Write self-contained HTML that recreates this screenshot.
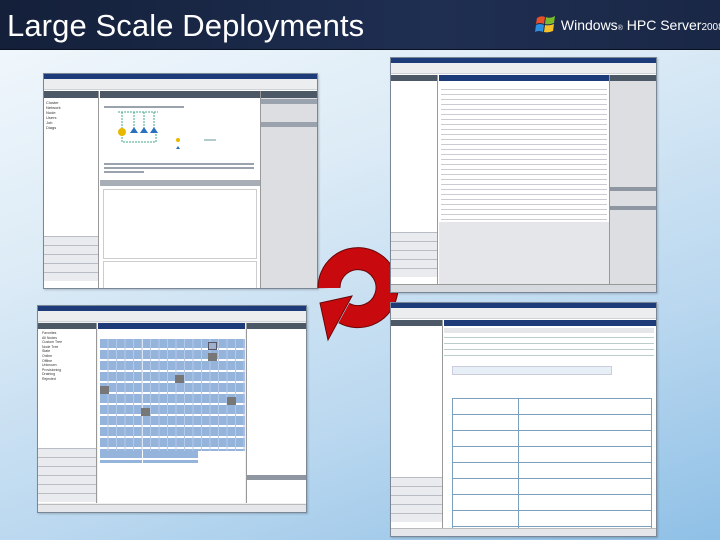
<!DOCTYPE html>
<html><head><meta charset="utf-8"><style>
*{margin:0;padding:0;box-sizing:border-box}
body{width:720px;height:540px;overflow:hidden;position:relative;font-family:"Liberation Sans",sans-serif;
background:linear-gradient(160deg,#f4f9fd 0%,#dcebf6 35%,#b9d7ef 70%,#8fc0e6 100%)}
.hdr{position:absolute;left:0;top:0;width:720px;height:50px;background:linear-gradient(90deg,#14203a,#1f2f52 60%,#1a2746);border-bottom:1px solid #0a1020}
.hdr h1{position:absolute;left:7px;top:8px;color:#fff;font-weight:normal;font-size:31px;letter-spacing:0.1px}
.logo{position:absolute;left:535px;top:14px;color:#fff;font-size:14px;white-space:nowrap}
.win{position:absolute;background:#fff;border:1px solid #7a8797;overflow:hidden;box-shadow:1px 1px 2px rgba(0,0,0,.2);z-index:1}
.hi{z-index:3}
.tb{position:absolute;left:0;top:0;right:0;height:5px;background:#1d3b78}
.menu{position:absolute;left:0;top:5px;right:0;height:11px;background:#ecedef;border-bottom:1px solid #cfd3d8}
.pane{position:absolute;}
.ph{position:absolute;left:0;right:0;top:0;height:6px;background:#4d5866}
.g{background:#dcdee2}
.nav{position:absolute;left:0;right:0;height:9px;border-top:1px solid #b8bdc5;background:#e9ebee}
.cell{position:absolute;width:9px;height:8px;background:#95b4dc}
.t{position:absolute;height:2px;background:#9aa2ad}
</style></head><body>
<div class="hdr"><h1>Large Scale Deployments</h1>
<div class="logo"><svg width="22" height="20" style="vertical-align:-4px"><path d="M2 4 Q6 1 10 3 L9 10 Q5 8 1 10Z" fill="#e8502a"/><path d="M11 3 Q15 5 20 2 L19 9 Q14 11 10 10Z" fill="#7cbb2c"/><path d="M1 11 Q5 9 9 11 L8 18 Q4 16 0 18Z" fill="#2b8ee0"/><path d="M10 11 Q14 12 19 10 L18 17 Q13 19 9 18Z" fill="#f7c12a"/></svg> Windows<span style="font-size:7px">®</span> HPC Server<span style="font-size:10px">2008</span></div></div>

<!-- window 1 -->
<div class="win" style="left:43px;top:73px;width:275px;height:216px">
<div class="tb"></div><div class="menu"></div>
<div class="pane g" style="left:0;top:17px;width:55px;height:199px;background:#fff;border-right:1px solid #999">
<div class="ph" style="height:7px"></div>
<div style="position:absolute;left:2px;top:9px;font-size:4px;line-height:5px;color:#333">Cluster<br>Network<br>Node<br>Users<br>Job<br>Diags</div>
<div class="nav" style="top:145px"></div><div class="nav" style="top:154px"></div><div class="nav" style="top:163px"></div><div class="nav" style="top:172px"></div><div class="nav" style="top:181px"></div></div>
<div class="pane" style="left:56px;top:17px;width:160px;height:199px">
<div class="ph" style="height:7px"></div>
<div class="t" style="left:4px;top:15px;width:80px"></div>
<svg style="position:absolute;left:14px;top:18px" width="130" height="45"><path d="M4 3H44M8 3V20M20 3V20M30 3V20M40 3V20M8 25V33H42V25" stroke="#4a8" stroke-dasharray="2 1" fill="none"/><circle cx="8" cy="23" r="4" fill="#e8b800"/><path d="M20 18l4 6h-8zM30 18l4 6h-8zM40 18l4 6h-8z" fill="#2a70c0"/><circle cx="64" cy="31" r="2" fill="#e8b800"/><path d="M64 37l2 3h-4z" fill="#2a70c0"/><path d="M90 31h12" stroke="#699"/></svg>
<div class="t" style="left:4px;top:72px;width:150px"></div><div class="t" style="left:4px;top:76px;width:150px"></div><div class="t" style="left:4px;top:80px;width:40px"></div>
<div style="position:absolute;left:0;right:0;top:89px;height:6px;background:#a8aeb6"></div>
<div style="position:absolute;left:3px;right:3px;top:98px;height:70px;border:1px solid #ccc"></div>
<div style="position:absolute;left:3px;right:3px;top:170px;height:29px;border:1px solid #ccc"></div></div>
<div class="pane" style="left:216px;top:17px;width:59px;height:199px;background:#dcdee2;border-left:1px solid #999">
<div class="ph" style="height:7px"></div>
<div style="position:absolute;left:0;right:0;top:8px;height:5px;background:#9aa2ad"></div>
<div style="position:absolute;left:0;right:0;top:31px;height:5px;background:#9aa2ad"></div></div>
</div>

<!-- window 2 -->
<div class="win hi" style="left:390px;top:57px;width:267px;height:236px">
<div class="tb"></div><div class="menu"></div>
<div class="pane" style="left:0;top:17px;width:47px;height:219px;background:#fff;border-right:1px solid #999">
<div class="ph" style="height:6px"></div>
<div class="nav" style="top:157px"></div><div class="nav" style="top:166px"></div><div class="nav" style="top:175px"></div><div class="nav" style="top:184px"></div><div class="nav" style="top:193px"></div></div>
<div class="pane" style="left:48px;top:17px;width:170px;height:219px">
<div class="ph" style="height:6px;background:#1d3b78"></div>
<div style="position:absolute;left:2px;right:2px;top:12px;height:134px;background:repeating-linear-gradient(#fff 0 2px,#c9cdd3 2px 3px,#fff 3px 5px)"></div>
<div style="position:absolute;left:0;right:0;top:147px;bottom:10px;background:#e4e6ea"></div></div>
<div class="pane" style="left:218px;top:17px;width:49px;height:219px;background:#dcdee2;border-left:1px solid #999">
<div class="ph" style="height:6px"></div>
<div style="position:absolute;left:0;right:0;top:112px;height:4px;background:#8e96a2"></div>
<div style="position:absolute;left:0;right:0;top:131px;height:4px;background:#8e96a2"></div></div>
<div style="position:absolute;left:0;right:0;bottom:0;height:8px;background:#d6d9de;border-top:1px solid #999"></div>
</div>

<!-- window 3 -->
<div class="win" style="left:37px;top:305px;width:270px;height:208px;background:#f0f0f0">
<div class="tb"></div><div class="menu"></div>
<div class="pane" style="left:0;top:17px;width:59px;height:180px;background:#fff;border-right:1px solid #999">
<div class="ph" style="height:6px"></div>
<div style="position:absolute;left:4px;top:8px;font-size:3.5px;line-height:4.6px;color:#333">Favorites<br>All Nodes<br>Custom Tree<br>Node Tree<br>State<br>Online<br>Offline<br>Unknown<br>Provisioning<br>Draining<br>Rejected</div>
<div class="nav" style="top:125px"></div><div class="nav" style="top:134px"></div><div class="nav" style="top:143px"></div><div class="nav" style="top:152px"></div><div class="nav" style="top:161px"></div><div class="nav" style="top:170px"></div></div>
<div class="pane" style="left:60px;top:17px;width:147px;height:180px;background:#fff">
<div class="ph" style="height:6px;background:#1d3b78"></div>
<div style="position:absolute;left:2px;right:0;top:16px;height:124px;background:
linear-gradient(90deg,transparent 0 42px,#fff 42px 43px,transparent 43px) ,
repeating-linear-gradient(#95b4dc 0 9px,#fff 9px 11px),#fff"></div>
<div style="position:absolute;left:2px;right:0;top:16px;height:112px;background:repeating-linear-gradient(90deg,transparent 0 7.5px,#b5c9e6 7.5px 8.5px)"></div>
<div style="position:absolute;left:100px;right:0;top:128px;height:12px;background:#fff"></div>
<div class="cell" style="left:110px;top:19px;background:#a0b0cc;border:1px solid #556"></div>
<div class="cell" style="left:110px;top:30px;background:#777"></div>
<div class="cell" style="left:77px;top:52px;background:#777"></div>
<div class="cell" style="left:2px;top:63px;background:#777"></div>
<div class="cell" style="left:129px;top:74px;background:#777"></div>
<div class="cell" style="left:43px;top:85px;background:#777"></div>
</div>
<div class="pane" style="left:208px;top:17px;width:62px;height:180px;background:#fff;border-left:1px solid #999">
<div class="ph" style="height:6px"></div>
<div style="position:absolute;left:0;right:0;top:152px;height:5px;background:#8e96a2"></div></div>
<div style="position:absolute;left:0;right:0;bottom:0;height:8px;background:#e4e6ea;border-top:1px solid #bbb"></div>
</div>

<!-- window 4 -->
<div class="win hi" style="left:390px;top:302px;width:267px;height:235px">
<div class="tb"></div><div class="menu"></div>
<div class="pane" style="left:0;top:17px;width:52px;height:210px;background:#fff;border-right:1px solid #999">
<div class="ph" style="height:6px"></div>
<div class="nav" style="top:157px"></div><div class="nav" style="top:166px"></div><div class="nav" style="top:175px"></div><div class="nav" style="top:184px"></div><div class="nav" style="top:193px"></div></div>
<div class="pane" style="left:53px;top:17px;width:214px;height:210px;background:#fff">
<div class="ph" style="height:6px;background:#1d3b78"></div>
<div style="position:absolute;left:0;right:4px;top:8px;height:5px;background:#e4e6ea"></div>
<div style="position:absolute;left:0;right:4px;top:14px;height:24px;background:repeating-linear-gradient(#fff 0 3px,#bcc 3px 4px,#fff 4px 6px)"></div>
<div style="position:absolute;left:8px;width:160px;top:46px;height:9px;background:#e6eef6;border:1px solid #ccd"></div>
<div style="position:absolute;left:8px;width:200px;top:78px;height:132px;border:1px solid #7ba0bd;background:repeating-linear-gradient(#fff 0 15px,#7ba0bd 15px 16px)"></div>
<div style="position:absolute;left:74px;width:1px;top:78px;height:132px;background:#7ba0bd"></div>
</div>
<div style="position:absolute;left:0;right:0;bottom:0;height:8px;background:#e4e6ea;border-top:1px solid #bbb"></div>
</div>

<!-- red arrow -->
<svg style="position:absolute;left:300px;top:240px;z-index:2" width="100" height="110">
<path d="M29 48 A29 29 0 1 1 44 73" fill="none" stroke="#6a0505" stroke-width="23"/>
<path d="M29 48 A29 29 0 1 1 44 73" fill="none" stroke="#c80a0e" stroke-width="21"/>
<path d="M20 63 L52 56 L28 100Z" fill="#c80a0e" stroke="#6a0505" stroke-width="1"/>
</svg>
</body></html>
